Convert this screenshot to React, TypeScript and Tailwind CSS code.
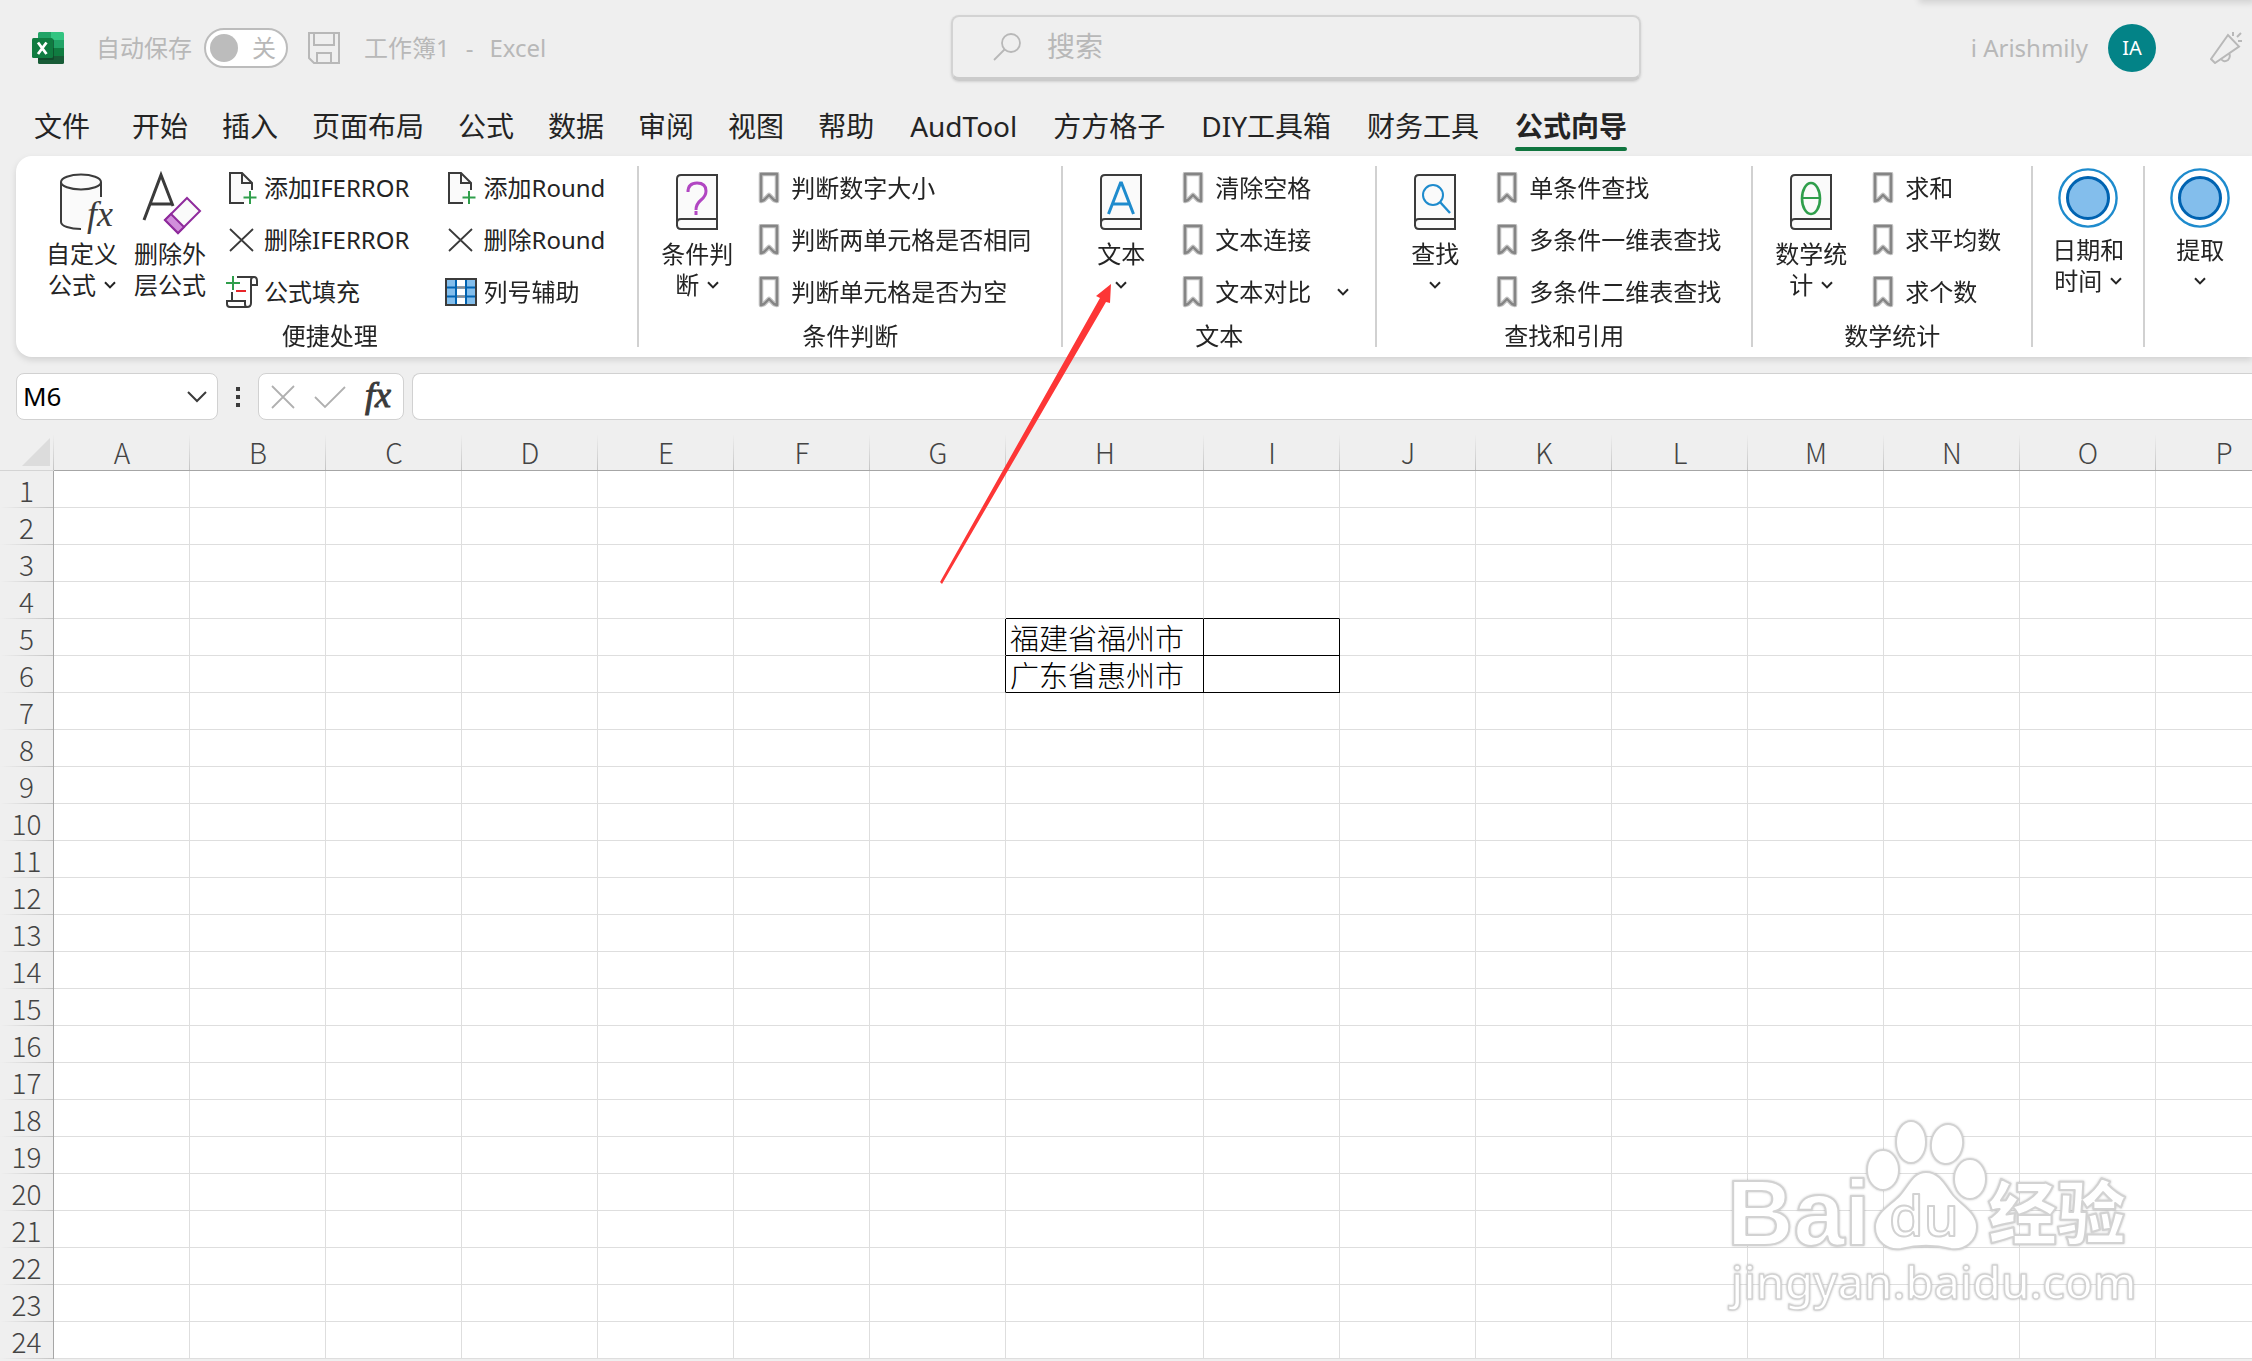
import type { ReactNode } from "react";

const tabs = ["开始", "插入", "页面布局", "公式", "数据", "审阅", "视图", "帮助"];
const addinTabs = ["AudTool", "方方格子", "DIY工具箱", "财务工具"];
const columns = "ABCDEFGHIJKLMNOP".split("");
const rows = Array.from({ length: 24 }, (_, i) => i + 1);
const cells: Record<string, string> = {
  H5: "福建省福州市",
  H6: "广东省惠州市",
};

function Chevron() {
  return (
    <svg className="h-[8px] w-[12px] shrink-0" viewBox="0 0 12 8" fill="none" stroke="#242424" strokeWidth="2">
      <path d="M1 1.2 6 6.4 11 1.2" />
    </svg>
  );
}

function Book({ children }: { children: ReactNode }) {
  return (
    <svg className="size-16" viewBox="0 0 64 64" fill="none" stroke="#3b3b3b" strokeWidth="2">
      <path d="M12 58V11q0-4 4-4h36v47" fill="#fafafa" />
      <path d="M52 7v54H16q-4 0-4-4v-2q0-4 4-4h36" fill="#fafafa" />
      {children}
    </svg>
  );
}

function Circles() {
  return (
    <svg className="size-15" viewBox="0 0 60 60">
      <circle cx="30" cy="30" r="28.6" fill="#fff" stroke="#1e8bcd" strokeWidth="2.4" />
      <circle cx="30" cy="30" r="20.5" fill="#83beec" stroke="#0063b1" strokeWidth="3" />
    </svg>
  );
}

function Bookmark() {
  return (
    <svg className="size-8" viewBox="0 0 32 32" fill="none" strokeLinejoin="round">
      <path d="M8 2h16v27l-3-1-5-5-5 5-3 1z" stroke="#c4c4c4" strokeWidth="4.600" />
      <path d="M8 2h16v27l-3-1-5-5-5 5-3 1z" stroke="#858585" strokeWidth="2.400" />
    </svg>
  );
}

function AddPage() {
  return (
    <svg className="size-8" viewBox="0 0 32 32" fill="none" stroke="#3b3b3b" strokeWidth="2">
      <path d="M18 31H4V1h12l10 10v7" fill="#fafafa" />
      <path d="M16 1v10h10" />
      <path d="M24 19v13M17.500 25.500h13" stroke="#2f9e4b" />
    </svg>
  );
}

function Cross() {
  return (
    <svg className="size-8" viewBox="0 0 32 32" fill="none" stroke="#3b3b3b" strokeWidth="1.8">
      <path d="M4 5 27 27M27 5 4 27" />
    </svg>
  );
}

function BigButton({ icon, lines, arrow = true }: { icon: ReactNode; lines: string[]; arrow?: boolean }) {
  return (
    <button className="flex w-22 shrink-0 flex-col items-center gap-1.5 pt-1.5 text-2xl leading-[31px] whitespace-nowrap">
      {icon}
      <span className="flex flex-col items-center">
        <span>{lines[0]}</span>
        <span className="flex h-[31px] items-center gap-2">
          {lines[1]}
          {arrow && <Chevron />}
        </span>
      </span>
    </button>
  );
}

function SmallButton({ icon, children, arrow }: { icon?: ReactNode; children: string; arrow?: boolean }) {
  return (
    <button className="flex h-[52px] items-center gap-1.5 text-2xl whitespace-nowrap">
      {icon ?? <Bookmark />}
      {children}
      {arrow && (
        <span className="-mr-1 pl-5">
          <Chevron />
        </span>
      )}
    </button>
  );
}

function Group({ label, children }: { label: string; children: ReactNode }) {
  return (
    <section className="flex shrink-0 flex-col">
      <div className="flex gap-3 pt-1.5 pr-7.5 pl-3.5">{children}</div>
      <h2 className="text-center text-2xl leading-9">{label}</h2>
    </section>
  );
}

function Divider() {
  return <div className="my-2.5 w-0.5 shrink-0 bg-[#d1d1d1]" />;
}

function TitleBar() {
  return (
    <header className="grid h-24 grid-cols-[951fr_690fr_611fr] items-center text-2xl text-[#b8b8b8]">
      <div className="flex items-center pl-8 whitespace-nowrap">
        <svg className="size-8" viewBox="0 0 32 32">
          <path d="M6 1.500Q6 0 7.500 0H19v8H6z" fill="#21a366" />
          <path d="M19 0h11.500Q32 0 32 1.500V8H19z" fill="#33c481" />
          <path d="M6 8h13v8H6z" fill="#107c41" />
          <path d="M19 8h13v8H19z" fill="#21a366" />
          <path d="M6 16h13v8H6z" fill="#185c37" />
          <path d="M19 16h13v8H19z" fill="#107c41" />
          <path d="M6 24h26v6.500q0 1.500-1.500 1.500h-23Q6 32 6 30.500z" fill="#185c37" />
          <rect x="6" y="7" width="16" height="21" rx="1.500" fill="#0b3f23" opacity=".6" />
          <rect y="6" width="21" height="20" rx="1.500" fill="#107c41" />
          <path d="m6 10.500 8.500 11.500M14.500 10.500 6 22" stroke="#fff" strokeWidth="2.800" />
        </svg>
        <label className="flex cursor-pointer items-center gap-3 pl-8">
          自动保存
          <input type="checkbox" role="switch" className="sr-only" />
          <span className="flex h-10 w-21 items-center justify-between rounded-full border-2 border-[#bcbcbc] bg-white px-1 pr-2.5">
            <span className="size-7 rounded-full bg-[#bcbcbc]" />关
          </span>
        </label>
        <button aria-label="保存" className="ml-5">
          <svg className="size-8" viewBox="0 0 32 32" fill="none" stroke="#b8b8b8" strokeWidth="2">
            <path d="M1 1h30v30H6l-5-5zM6 1v12h20V1M9 31V21h14v10" />
          </svg>
        </button>
        <h1 className="flex gap-4 pl-6">
          <span>工作簿1</span>
          <span>-</span>
          <span>Excel</span>
        </h1>
      </div>
      <label className="flex h-[66px] items-center gap-[26px] rounded-lg border-2 border-b-4 border-[#d3d3d3] border-b-[#cbcbcb] pl-10 shadow-sm">
        <svg className="size-7 shrink-0" viewBox="0 0 28 28" fill="none" stroke="#b8b8b8" strokeWidth="1.800">
          <circle cx="18" cy="10" r="9" />
          <path d="M11.500 16.500 1 27" />
        </svg>
        <input
          type="search"
          aria-label="搜索"
          placeholder="搜索"
          className="min-w-0 flex-1 bg-transparent text-[28px] outline-none placeholder:text-[#b8b8b8]"
        />
      </label>
      <div className="flex items-center justify-end pr-2.5">
        <span>i Arishmily</span>
        <button className="ml-5 size-12 rounded-full bg-[#038387] text-xl text-white">IA</button>
        <button aria-label="即将推出" className="ml-[54px]">
          <svg className="size-8" viewBox="0 0 32 32" fill="none" stroke="#b8b8b8" strokeWidth="2">
            <path d="M1 27 18 3l11 11.500L5 31zM11 27q3 4 7 1 3-3 1-7M23 0v4M27 5l4-4M28 9h4" />
          </svg>
        </button>
      </div>
    </header>
  );
}

function Tabs() {
  return (
    <nav className="flex h-15 items-center gap-9 pl-[34px] text-[28px] leading-[38px] whitespace-nowrap">
      <div className="flex gap-[34px]">
        <a href="#file" className="mr-2">
          文件
        </a>
        {tabs.map((tab) => (
          <a key={tab} href={`#${tab}`}>
            {tab}
          </a>
        ))}
      </div>
      {addinTabs.map((tab) => (
        <a key={tab} href={`#${tab}`}>
          {tab}
        </a>
      ))}
      <a href="#wizard" aria-current="page" className="relative font-bold">
        公式向导
        <span className="absolute inset-x-0 -bottom-1.5 h-1 rounded-full bg-[#10753f]" />
      </a>
    </nav>
  );
}

function Ribbon() {
  return (
    <div className="ml-4 flex h-[201px] overflow-hidden rounded-l-2xl bg-white">
      <div className="pr-0.5 pl-2">
        <Group label="便捷处理">
          <div className="flex">
            <BigButton
              lines={["自定义", "公式"]}
              icon={
                <svg className="size-16 overflow-visible" viewBox="0 0 64 64" fill="none" stroke="#3b3b3b" strokeWidth="2">
                  <path d="M11 14v41c0 4 9 7 20 7l21-28V14" fill="#fafafa" stroke="none" />
                  <ellipse cx="31" cy="14" rx="20" ry="7.500" fill="#fafafa" />
                  <path d="M11 14v40c0 4 9 7 20 7M51 14v15" />
                  <text x="37" y="58" fill="#3b3b3b" stroke="none" className="font-['Liberation_Serif'] text-[36px] italic">
                    fx
                  </text>
                </svg>
              }
            />
            <BigButton
              lines={["删除外", "层公式"]}
              arrow={false}
              icon={
                <svg className="size-16 overflow-visible" viewBox="0 0 64 64" fill="none" stroke="#3b3b3b" strokeWidth="3">
                  <path d="m6 52 17-45 12 31M11 36h24" />
                  <g stroke="#8f2b9c" strokeWidth="2">
                    <path d="m49 30 13 13-22 22-13-13z" fill="#fafafa" />
                    <path d="m33 46-6 6 13 13 6-6z" fill="#d18fdb" />
                  </g>
                </svg>
              }
            />
          </div>
          <div className="flex gap-9">
            <div>
              <SmallButton icon={<AddPage />}>添加IFERROR</SmallButton>
              <SmallButton icon={<Cross />}>删除IFERROR</SmallButton>
              <SmallButton
                icon={
                  <svg className="size-8" viewBox="0 0 32 32" fill="none" stroke="#3b3b3b" strokeWidth="2">
                    <path d="M11 1h17q3 0 3 4v4h-6v18q0 4-4 4H4q-3 0-3-3v-3h18v3q0 3 2 3M25 9V4q0-3 3-3M6 16v9" />
                    <path d="M7 0v14M0 7h14" stroke="#2f9e4b" />
                    <path d="M10 15h10" stroke="#e8252a" />
                  </svg>
                }
              >
                公式填充
              </SmallButton>
            </div>
            <div>
              <SmallButton icon={<AddPage />}>添加Round</SmallButton>
              <SmallButton icon={<Cross />}>删除Round</SmallButton>
              <SmallButton
                icon={
                  <svg className="size-8" viewBox="0 0 32 32" fill="none" strokeWidth="2">
                    <path d="M1 3h30v26H1z" fill="#83beec" />
                    <path d="M11 3h10v26H11z" fill="#fff" />
                    <path d="M1 11.500h30M1 20.500h30M11 3v26M21 3v26" stroke="#0063b1" />
                    <path d="M12 11.500h8M12 20.500h8" stroke="#8a8a8a" />
                    <path d="M1 3h30v26H1z" stroke="#3b3b3b" />
                  </svg>
                }
              >
                列号辅助
              </SmallButton>
            </div>
          </div>
        </Group>
      </div>
      <Divider />
      <Group label="条件判断">
        <BigButton
          lines={["条件判", "断"]}
          icon={
            <Book>
              <path d="M23 24q0-9 9-9 9 0 9 8 0 5-5 9-5 4-5 10M31 43v4" stroke="#b146c2" strokeWidth="3" />
            </Book>
          }
        />
        <div>
          <SmallButton>判断数字大小</SmallButton>
          <SmallButton>判断两单元格是否相同</SmallButton>
          <SmallButton>判断单元格是否为空</SmallButton>
        </div>
      </Group>
      <Divider />
      <Group label="文本">
        <BigButton
          lines={["文本", ""]}
          icon={
            <Book>
              <path d="m19.500 46 12-31h1l12 31M24 36h16" stroke="#1e8bcd" strokeWidth="3" />
            </Book>
          }
        />
        <div>
          <SmallButton>清除空格</SmallButton>
          <SmallButton>文本连接</SmallButton>
          <SmallButton arrow>文本对比</SmallButton>
        </div>
      </Group>
      <Divider />
      <Group label="查找和引用">
        <BigButton
          lines={["查找", ""]}
          icon={
            <Book>
              <circle cx="30" cy="27" r="10" stroke="#1e8bcd" />
              <path d="m37 34 10 11" stroke="#1e8bcd" strokeWidth="2.400" />
            </Book>
          }
        />
        <div>
          <SmallButton>单条件查找</SmallButton>
          <SmallButton>多条件一维表查找</SmallButton>
          <SmallButton>多条件二维表查找</SmallButton>
        </div>
      </Group>
      <Divider />
      <Group label="数学统计">
        <BigButton
          lines={["数学统", "计"]}
          icon={
            <Book>
              <ellipse cx="32" cy="30.500" rx="9" ry="15.500" stroke="#2f9e4b" strokeWidth="2.600" />
              <path d="M23 30h18" stroke="#2f9e4b" strokeWidth="2" />
            </Book>
          }
        />
        <div>
          <SmallButton>求和</SmallButton>
          <SmallButton>求平均数</SmallButton>
          <SmallButton>求个数</SmallButton>
        </div>
      </Group>
      <Divider />
      <div className="flex items-start px-[11px] pt-1.5">
        <BigButton lines={["日期和", "时间"]} icon={<Circles />} />
      </div>
      <Divider />
      <div className="flex items-start px-[11px] pt-1.5">
        <BigButton lines={["提取", ""]} icon={<Circles />} />
      </div>
    </div>
  );
}

function FormulaBar() {
  return (
    <div className="flex h-[47px] items-stretch pl-4">
      <div className="flex w-[202px] items-center rounded-lg border border-[#d1d1d1] bg-white pr-2.5 pl-1.5">
        <input aria-label="名称框" defaultValue="M6" className="min-w-0 flex-1 text-[26px] text-black outline-none" />
        <button aria-label="展开名称框">
          <svg className="h-3 w-5" viewBox="0 0 20 12" fill="none" stroke="#3b3b3b" strokeWidth="2">
            <path d="m1 1 9 9 9-9" />
          </svg>
        </button>
      </div>
      <div className="flex w-10 flex-col items-center justify-center gap-1">
        <span className="size-1 bg-[#3b3b3b]" />
        <span className="size-1 bg-[#3b3b3b]" />
        <span className="size-1 bg-[#3b3b3b]" />
      </div>
      <div className="flex w-[146px] items-center justify-between rounded-lg border border-[#d1d1d1] bg-white px-3">
        <button aria-label="取消">
          <svg className="size-6" viewBox="0 0 24 24" fill="none" stroke="#b0b0b0" strokeWidth="1.800">
            <path d="m1 1 22 22M23 1 1 23" />
          </svg>
        </button>
        <button aria-label="输入">
          <svg className="h-6 w-8" viewBox="0 0 32 24" fill="none" stroke="#b0b0b0" strokeWidth="1.800">
            <path d="m1 12 10 10L31 2" />
          </svg>
        </button>
        <button
          aria-label="插入函数"
          className="pb-1 font-['Liberation_Serif',serif] text-[36px] leading-9 text-[#3b3b3b] italic [-webkit-text-stroke:1px_#3b3b3b]"
        >
          fx
        </button>
      </div>
      <input aria-label="编辑栏" className="ml-2 min-w-0 flex-1 rounded-l-lg border border-r-0 border-[#d1d1d1] bg-white px-3 text-[26px] outline-none" />
    </div>
  );
}

// Black box around H5:I6, plain gridlines everywhere else
function cellBorder(col: string, row: number) {
  const boxed = col === "H" || col === "I";
  if (row === 5 || row === 6) {
    if (boxed) return "border-r-black border-b-black";
    if (col === "G") return "border-r-black border-b-[#dedede]";
  }
  if (row === 4 && boxed) return "border-r-[#dedede] border-b-black";
  return "border-r-[#dedede] border-b-[#dedede]";
}

function Sheet() {
  return (
    <table className="w-[2292px] table-fixed border-separate border-spacing-0 font-['Noto_Sans_CJK_SC',sans-serif] font-light">
      <colgroup>
        <col className="w-[54px]" />
        {columns.map((col) => (
          <col key={col} className={col === "H" ? "w-[198px]" : "w-[136px]"} />
        ))}
      </colgroup>
      <thead>
        <tr className="h-[37px] text-[28px] leading-[36px] text-[#444]">
          <th aria-label="全选" className="border-b border-[#d4d4d4] bg-[linear-gradient(to_bottom,transparent,#c4c4c4)] bg-[length:1px_100%] bg-right bg-no-repeat p-0">
            <svg className="mr-1 ml-auto block size-7" viewBox="0 0 28 28">
              <path d="M28 0v28H0z" fill="#dcdcdc" />
            </svg>
          </th>
          {columns.map((col) => (
            <th
              key={col}
              scope="col"
              className="border-b border-[#a6a6a6] bg-[linear-gradient(to_bottom,transparent,#c4c4c4)] bg-[length:1px_100%] bg-right bg-no-repeat p-0 font-light"
            >
              {col}
            </th>
          ))}
        </tr>
      </thead>
      <tbody>
        {rows.map((row) => (
          <tr key={row} className="h-[37px] text-[29px] leading-[36px]">
            <th
              scope="row"
              className="border-r border-[#a6a6a6] bg-[linear-gradient(to_right,transparent,#c4c4c4)] bg-[length:100%_1px] bg-bottom bg-no-repeat p-0 text-[28px] leading-[36px] font-light text-[#444]"
            >
              {row}
            </th>
            {columns.map((col) => (
              <td key={col} className={`border-r border-b bg-white py-0 pr-0 pl-1 whitespace-nowrap text-black ${cellBorder(col, row)}`}>
                {cells[col + row]}
              </td>
            ))}
          </tr>
        ))}
      </tbody>
    </table>
  );
}

function Watermark() {
  return (
    <svg
      className="pointer-events-none absolute right-[72px] bottom-[11px] h-[260px] w-[480px] drop-shadow-[0_0_1px_rgba(0,0,0,0.2)]"
      viewBox="0 0 480 260"
      fill="#fff"
      stroke="#d2d2d2"
      strokeWidth="2"
      strokeLinejoin="round"
    >
      <ellipse cx="183" cy="80" rx="16" ry="20" />
      <ellipse cx="211" cy="52" rx="15" ry="21" />
      <ellipse cx="247" cy="54" rx="16" ry="20" transform="rotate(10 247 54)" />
      <ellipse cx="270" cy="89" rx="16" ry="20" />
      <path d="M226 82c14 0 20 14 27 23s24 17 24 32c0 14-12 24-26 22-16-4-34-4-50 0-14 2-26-8-26-22 0-15 16-22 25-32s13-23 26-23z" />
      <text x="27" y="155" className="font-['Liberation_Sans'] text-[92px] font-bold">
        Bai
      </text>
      <text x="189" y="146" className="font-['Noto_Sans'] text-[56px] font-medium">
        du
      </text>
      <text x="288" y="149" className="font-['Noto_Sans_CJK_SC'] text-[69px] font-black">
        经验
      </text>
      <text x="31" y="209" strokeWidth="1.500" className="font-['Noto_Sans'] text-[46px] font-medium">
        jingyan.baidu.com
      </text>
    </svg>
  );
}

export default function App() {
  return (
    <div className="relative h-screen overflow-hidden bg-[#efefef] font-['Noto_Sans','Noto_Sans_CJK_SC',sans-serif] text-[#242424]">
      <div className="absolute -top-2 right-0 h-2 w-[330px] shadow-[0_0_6px_3px_rgba(0,0,0,0.12)]" />
      <TitleBar />
      <Tabs />
      <div className="rounded-l-2xl drop-shadow-md">
        <Ribbon />
      </div>
      <div className="pt-4 pb-3.5">
        <FormulaBar />
      </div>
      <Sheet />
      <Watermark />
      <svg className="pointer-events-none absolute top-[280px] left-[936px] h-[308px] w-[180px]" viewBox="936 280 180 308">
        <path d="m940 582 160-284-4-2 15-12-1 19-4-1-164 282z" fill="#fd3636" />
      </svg>
    </div>
  );
}
